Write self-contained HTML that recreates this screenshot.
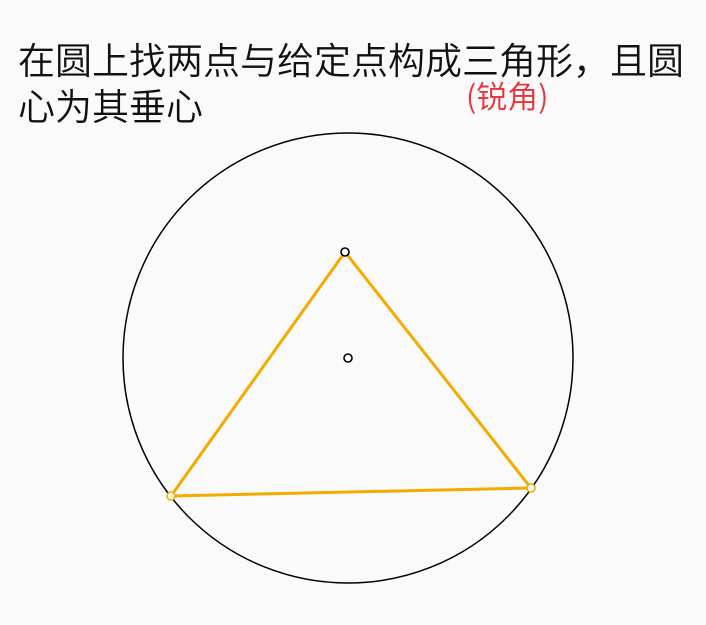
<!DOCTYPE html>
<html><head><meta charset="utf-8"><style>
html,body{margin:0;padding:0;background:#fafafa;width:706px;height:625px;overflow:hidden;position:relative}
.t{position:absolute;left:18px;top:35px;font-family:"Noto Sans CJK SC",sans-serif;font-size:37px;line-height:46px;color:#111;white-space:nowrap;font-weight:350}
.r{position:absolute;left:466px;top:77px;font-family:"Noto Sans CJK SC",sans-serif;font-size:31px;line-height:36px;color:#e8323c;font-weight:350}
svg{position:absolute;left:0;top:0}
</style></head><body>
<div class="t">在圆上找两点与给定点构成三角形，且圆<br>心为其垂心</div>
<div class="r">(锐角)</div>
<svg width="706" height="625">
<circle cx="348" cy="358" r="225" fill="none" stroke="#000" stroke-width="1.5"/>
<polygon points="345,252 171,496 531,488" fill="none" stroke="#f5aa00" stroke-width="3" stroke-linejoin="round"/>
<circle cx="345" cy="252" r="4" fill="#fff" stroke="#000" stroke-width="1.6"/>
<circle cx="348" cy="358" r="4" fill="#fff" stroke="#000" stroke-width="1.6"/>
<circle cx="171" cy="496" r="4" fill="#fff" stroke="#f5aa00" stroke-width="1.6"/>
<circle cx="531" cy="488" r="4" fill="#fff" stroke="#f5aa00" stroke-width="1.6"/>
</svg>
</body></html>
